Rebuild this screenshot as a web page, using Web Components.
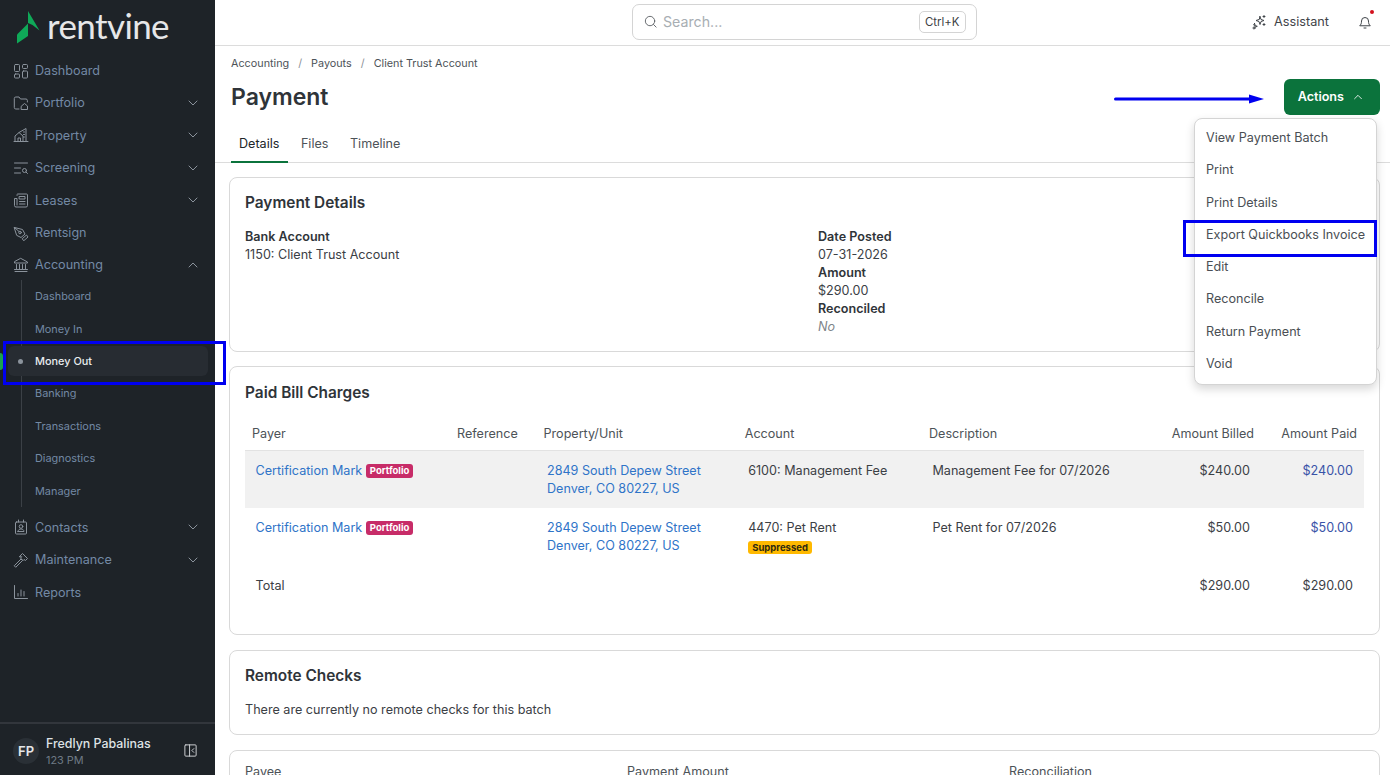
<!DOCTYPE html>
<html lang="en"><head><meta charset="utf-8"><title>Payment</title>
<style>
html,body{margin:0;height:100%;overflow:hidden;background:#fff}
body{font-family:Inter,"Liberation Sans",sans-serif;font-size:13px;color:#212529}
rv-app{display:flex;width:1390px;height:775px;overflow:hidden;position:relative}
</style></head><body>
<rv-app>
  <rv-sidebar slot="side"></rv-sidebar>
  <rv-main></rv-main>
</rv-app>
<script>
const ic={
dash:'<rect x="1.5" y="1.5" width="5" height="7" rx="1"/><rect x="9.5" y="1.5" width="5" height="4" rx="1"/><rect x="1.5" y="11" width="5" height="4" rx="1"/><rect x="9.5" y="8" width="5" height="7" rx="1"/>',
port:'<path d="M6 14H2.8A1.5 1.5 0 0 1 1.3 12.500V3.500A1.500 1.500 0 0 1 2.800 2H6l1.500 2h5.500a1.500 1.500 0 0 1 1.400 1.500V7"/><path d="M8.500 11l3-2.500 3 2.500v3.500h-6z"/>',
prop:'<path d="M1 14.500h14M2 14.500V9l4-3.500L10 9v5.500M5 14.500v-3.500h2.500v3.500M6 5.500L13 1.500v13M10.500 5h1M10.500 7.500h1M10.500 10h1"/>',
screen:'<path d="M1.500 3h13M1.500 8h6M1.500 13h6"/><circle cx="11.500" cy="10.500" r="2"/><path d="M13 12l1.500 1.500"/>',
lease:'<path d="M4 3.500a1 1 0 0 1 1-1.500h8.500a1 1 0 0 1 1 1v10.500a1.500 1.500 0 0 1-1.500 1.500H3a1.500 1.500 0 0 1-1.500-1.500V6.500H4v6.500"/><rect x="6.500" y="4.500" width="5.500" height="2.500"/><path d="M6.500 9.500h5.500M6.500 12h5.500"/>',
sign:'<path d="M1.500 2.500L9.500 4.500 12 9 8 12.500 4 10.500z"/><circle cx="7" cy="7.500" r="1.300"/><path d="M1.500 2.500L6 6.500M9.500 13.500L13.500 10 15 12 11 15.500z"/>',
bank:'<path d="M8 1.500l6.500 3.500v1h-13v-1zM2 14.500h12M1.500 12.500h13M3.500 7.500v5M6.500 7.500v5M9.500 7.500v5M12.500 7.500v5"/>',
contact:'<rect x="2.500" y="3" width="11" height="12" rx="1"/><path d="M5.500 1v2M10.500 1v2"/><circle cx="8" cy="7.500" r="1.800"/><path d="M5 12.500h6c0-1.500-1.300-2.500-3-2.500s-3 1-3 2.500z"/>',
maint:'<path d="M1.500 13.500L8 7l1.500 1.500-6.500 6.500zM6.500 4.500l3-3 5 5-2 2-1.500-1-1 1-2.500-2.500 1-1z"/>',
report:'<path d="M1.500 1.500v13h13M5 12V9.500M8 12V6M11 12V7.500"/>'
};
const svg=(p,s=16,extra='')=>`<svg width="${s}" height="${s}" viewBox="0 0 16 16" fill="none" stroke="currentColor" stroke-width="1" stroke-linecap="round" stroke-linejoin="round" ${extra}>${p}</svg>`;
const chev=(up)=>`<svg width="12" height="12" viewBox="0 0 12 12" fill="none" stroke="currentColor" stroke-width="1" stroke-linecap="round" stroke-linejoin="round"><path d="${up?'M2 8l4-4 4 4':'M2 4l4 4 4-4'}"/></svg>`;
class Base extends HTMLElement{
  constructor(){super();this.attachShadow({mode:'open'})}
  connectedCallback(){this.shadowRoot.innerHTML=this.render()}
}
const def=(n,r)=>customElements.define(n,class extends Base{render(){return r.call(this)}});

def('rv-app',function(){return `<style>:host{display:flex}</style><slot name="side"></slot><slot></slot>`});

def('rv-nav-item',function(){
  const i=this.getAttribute('icon'),c=this.getAttribute('chev');
  return `<style>:host{display:flex;align-items:center;height:32.4px;padding:0 16px 0 13px;color:#7389a5;font-size:12.6px;flex:none}
  svg{flex:none}.ic{width:16px;height:16px;margin-right:6px;color:#8b939c}span{flex:1}.c{color:#8b939c;display:flex}</style>
  <div class="ic">${svg(ic[i])}</div><span><slot></slot></span>${c?`<div class="c">${chev(c==='up')}</div>`:''}`;
});
def('rv-sub-item',function(){
  const a=this.hasAttribute('active');
  return `<style>:host{display:flex;align-items:center;height:32.4px;padding-left:35px;font-size:10.9px;color:${a?'#e9ecef':'#7389a5'};position:relative;flex:none;font-weight:${a?500:400}}
  .bg{position:absolute;left:8px;right:7px;top:1.500px;bottom:1.500px;background:#272c32;border-radius:6px}
  .dot{position:absolute;left:18px;top:14px;width:5px;height:5px;border-radius:50%;background:#8b939c}
  .pip{position:absolute;left:0;top:8px;width:3px;height:17px;background:#1aa251;border-radius:0 3px 3px 0}
  span{position:relative}</style>
  ${a?'<div class="pip"></div><div class="bg"></div><div class="dot"></div>':''}<span><slot></slot></span>`;
});
def('rv-sidebar',function(){
  return `<style>:host{display:flex;flex-direction:column;width:215px;height:775px;background:#1e2328;flex:none;color:#7389a5}
  .logo{display:flex;align-items:center;height:54.4px;padding-left:17px;flex:none;color:#e6e7e8;font-family:Lato,Inter,sans-serif;font-size:35px;font-weight:400;letter-spacing:-.6px;box-sizing:border-box}
  .logo svg{margin-right:7px;flex:none}.logo span{margin-bottom:4px}
  nav{display:flex;flex-direction:column;flex:1;min-height:0}
  .sub{position:relative;display:flex;flex-direction:column;flex:none;margin:-1px 0 4.300px}
  .sub::before{content:"";position:absolute;left:21px;top:0;bottom:0;width:1px;background:#3b4046}
  .foot{height:49px;flex:none;border-top:2px solid #32363c;display:flex;align-items:center;padding:2px 17px 0 13px;gap:7px}
  .av{width:26px;height:26px;border-radius:50%;background:#2a3036;color:#e5e7e9;font-weight:600;font-size:13px;display:flex;align-items:center;justify-content:center;flex:none}
  .who{flex:1;line-height:16px;margin-top:2px}.n{color:#dfe2e5;font-size:12.4px;font-weight:500}.r{font-size:10.9px;color:#6f7a85}
  .col{color:#d5d8db;display:flex}</style>
  <div class="logo"><svg width="23" height="33" viewBox="0 0 23 33" aria-hidden="true"><path d="M0 23.500L11 12.500V25L0 32.500z" fill="#0fa958"/><path d="M11 0L22.500 19.500 15.500 14 11 12z" fill="#0fa958"/></svg><span>rentvine</span></div>
  <nav>
    <rv-nav-item icon="dash">Dashboard</rv-nav-item>
    <rv-nav-item icon="port" chev="down">Portfolio</rv-nav-item>
    <rv-nav-item icon="prop" chev="down">Property</rv-nav-item>
    <rv-nav-item icon="screen" chev="down">Screening</rv-nav-item>
    <rv-nav-item icon="lease" chev="down">Leases</rv-nav-item>
    <rv-nav-item icon="sign">Rentsign</rv-nav-item>
    <rv-nav-item icon="bank" chev="up">Accounting</rv-nav-item>
    <div class="sub">
      <rv-sub-item>Dashboard</rv-sub-item>
      <rv-sub-item>Money In</rv-sub-item>
      <rv-sub-item active>Money Out</rv-sub-item>
      <rv-sub-item>Banking</rv-sub-item>
      <rv-sub-item>Transactions</rv-sub-item>
      <rv-sub-item>Diagnostics</rv-sub-item>
      <rv-sub-item>Manager</rv-sub-item>
    </div>
    <rv-nav-item icon="contact" chev="down">Contacts</rv-nav-item>
    <rv-nav-item icon="maint" chev="down">Maintenance</rv-nav-item>
    <rv-nav-item icon="report">Reports</rv-nav-item>
  </nav>
  <div class="foot"><div class="av">FP</div><div class="who"><div class="n">Fredlyn Pabalinas</div><div class="r">123 PM</div></div>
  <div class="col">${svg('<rect x="2" y="2" width="12" height="12" rx="1"/><path d="M7 2v12M11.500 6L9.500 8l2 2"/>',15)}</div></div>`;
});
def('rv-topbar',function(){
  return `<style>:host{display:flex;align-items:center;height:45px;border-bottom:1px solid #dcdcdc;flex:none;position:relative;box-sizing:content-box}
  .wrap{flex:1;display:flex;justify-content:center;padding-left:19px}
  .search{width:345px;height:36px;box-sizing:border-box;border:1px solid #d4d4d4;border-radius:7px;display:flex;align-items:center;padding:0 10px 0 10px;color:#a8aeb3;font-size:14.2px;margin:0 0 2px -15px}
  .search svg{color:#5f6368;margin-right:5px}.search span{flex:1}
  kbd{font:11.4px Inter,sans-serif;color:#3c4043;border:1px solid #d4d4d4;border-radius:5px;padding:0 5.500px;height:22px;line-height:20px;box-sizing:border-box}
  .right{position:absolute;right:17px;top:0;height:43px;display:flex;align-items:center;font-size:12.7px;color:#3f4449}
  .as{display:flex;align-items:center;gap:7px;margin-right:28px}
  .bell{position:relative;width:16px;height:16px}.bell i{position:absolute;right:-1px;top:-4px;width:4px;height:4px;border-radius:50%;background:#d3101c}</style>
  <div class="wrap"><div class="search">${svg('<circle cx="7.500" cy="7.500" r="5"/><path d="M11.200 11.200L14 14"/>',15)}<span>Search...</span><kbd>Ctrl+K</kbd></div></div>
  <div class="right"><div class="as">${svg('<path d="M9 2.500l1 3 3 1-3 1-1 3-1-3-3-1 3-1zM3.500 9.500l.8 2 2 .8-2 .8-.8-1.800-1-.6 1-.5zM13 1.500v2M12 2.500h2M13 9.500v2M12 10.500h2"/><circle cx="3" cy="14" r="1"/>',16)}<span>Assistant</span></div>
  <div class="bell">${svg('<path d="M3 11.500c1-1 1.500-2 1.500-4.500a3.500 3.500 0 0 1 7 0c0 2.500.5 3.500 1.500 4.500zM7 14h2"/>')}<i></i></div></div>`;
});
def('rv-btn',function(){
  return `<style>:host{display:flex;align-items:center;gap:8px;height:36px;padding:0 16px 0 14px;background:#0b733c;color:#fff;border-radius:6px;font-size:12.6px;font-weight:600;box-sizing:border-box;margin-top:-2px}
  svg{transform:scale(.85)}span{margin-bottom:1px}</style><span><slot></slot></span>${chev(true)}`;
});
def('rv-page-head',function(){
  return `<style>:host{display:flex;flex-direction:column;flex:none;height:117px;box-sizing:border-box;border-bottom:1px solid #dcdcdc;padding:0 10px 0 16px}
  .bc{display:flex;gap:9px;font-size:10.8px;color:#4d5358;height:35px;align-items:center;flex:none}
  .bc i{font-style:normal;color:#8a9096}
  .row{display:flex;align-items:flex-start;justify-content:space-between;height:50px;flex:none}
  h1{margin:0;font-size:23px;font-weight:600;color:#2f3439;line-height:33px}
  .tabs{display:flex;font-size:12.6px;color:#4d5358;margin-top:-2px}
  .t{padding:0 8px;height:34px;line-height:30px;box-sizing:border-box;margin-right:-3.500px}
  .t.a{border-bottom:2px solid #0b733c;color:#212529;padding-right:8.500px}</style>
  <div class="bc"><span>Accounting</span><i>/</i><span>Payouts</span><i>/</i><span>Client Trust Account</span></div>
  <div class="row"><h1>Payment</h1><rv-btn>Actions</rv-btn></div>
  <div class="tabs"><div class="t a">Details</div><div class="t" style="margin-left:8.500px">Files</div><div class="t" style="margin-left:9px">Timeline</div></div>`;
});
def('rv-card',function(){
  const t=this.getAttribute('title');
  return `<style>:host{display:block;border:1px solid #d9d9d9;border-radius:8px;background:#fff;padding:var(--pt,15px) 15px 15px;flex:none;box-sizing:border-box;height:var(--h,auto);margin-bottom:var(--mb,0)}
  h2{margin:0;font-size:15.4px;font-weight:600;color:#2f3439;line-height:20px}</style>
  ${t?`<h2>${t}</h2>`:''}<slot></slot>`;
});
def('rv-details',function(){
  return `<style>:host{display:grid;grid-template-columns:573px 1fr;margin-top:15.1px;font-size:12.6px;line-height:18px;color:#3b4045}
  b{font-weight:600;color:#2f3439;display:block}em{color:#7e8489;display:block}</style>
  <div><b>Bank Account</b>1150: Client Trust Account</div>
  <div><b>Date Posted</b>07-31-2026<b>Amount</b>$290.00<b>Reconciled</b><em>No</em></div>`;
});
def('rv-bills',function(){
  const portfolio='<span class="bd pk">Portfolio</span>';
  const row=(name,acc,desc,b,p,cl,extra)=>`<tr class="${cl}"><td><a>${name}</a> ${portfolio}</td><td></td><td><a>2849 South Depew Street<br>Denver, CO 80227, US</a></td><td>${acc}${extra||''}</td><td>${desc}</td><td class="r">${b}</td><td class="r"><a class="p">${p}</a></td></tr>`;
  return `<style>:host{display:block;margin-top:12.4px}
  table{border-collapse:collapse;table-layout:fixed;width:1119px;font-size:12.6px;color:#3b4045}
  th{font-weight:400;text-align:left;padding:2px 7px 0;height:33px;border-bottom:1px solid #e2e2e2;color:#4d5358}
  td{padding:11px 11px 0 10.5px;vertical-align:top;line-height:18px;height:46px}
  tr.g td{background:#f1f1f1}
  th.r{text-align:right}td.r{text-align:right}
  a{color:#2f74c8}a.p{color:#3953a8}
  .bd{display:inline-block;font-size:9.500px;font-weight:700;color:#fff;border-radius:3px;padding:0 4px;line-height:14px;height:14px;vertical-align:1px}
  .pk{background:#c72c68;margin-left:0}.y{background:#ffb900;color:#2f2a10;display:block;width:max-content;margin-top:4px;height:13px;line-height:13px}
  tfoot td{height:48px;padding-top:12px;line-height:18px}</style>
  <table><colgroup><col style="width:205px"><col style="width:86.500px"><col style="width:201.200px"><col style="width:184.300px"><col style="width:233px"><col style="width:106px"><col style="width:103px"></colgroup>
  <thead><tr><th>Payer</th><th>Reference</th><th>Property/Unit</th><th>Account</th><th>Description</th><th class="r">Amount Billed</th><th class="r">Amount Paid</th></tr></thead>
  <tbody>${row('Certification Mark','6100: Management Fee','Management Fee for 07/2026','$240.00','$240.00','g')}
  ${row('Certification Mark','4470: Pet Rent','Pet Rent for 07/2026','$50.00','$50.00','','<span class="bd y">Suppressed</span>')}</tbody>
  <tfoot><tr><td>Total</td><td></td><td></td><td></td><td></td><td class="r">$290.00</td><td class="r">$290.00</td></tr></tfoot></table>`;
});
def('rv-menu',function(){
  return `<style>:host{position:absolute;left:979px;top:117.5px;width:182.500px;height:267px;background:#fff;border:1px solid #d4d4d4;border-radius:8px;box-shadow:0 4px 10px rgba(0,0,0,.16);box-sizing:border-box;padding:2.8px 0;display:flex;flex-direction:column;font-size:12.6px;color:#4a4f54}
  div{height:32.300px;display:flex;align-items:center;padding-left:11px;white-space:nowrap}</style>
  <div>View Payment Batch</div><div>Print</div><div>Print Details</div><div>Export Quickbooks Invoice</div><div>Edit</div><div>Reconcile</div><div>Return Payment</div><div>Void</div>`;
});
def('rv-main',function(){
  return `<style>:host{flex:1;display:flex;flex-direction:column;min-width:0;height:775px;position:relative;overflow:hidden}
  .content{display:flex;flex-direction:column;gap:15px;padding:13.6px 10px 0 14px;flex:1;overflow:hidden}
  p{margin:14.5px 0 0;font-size:12.6px;color:#3b4045;line-height:18px}
  .pay{display:grid;grid-template-columns:382px 382px 1fr;font-size:12.6px;color:#4d5358;height:24px;margin-top:12.500px}</style>
  <rv-topbar></rv-topbar><rv-page-head></rv-page-head>
  <div class="content">
    <rv-card title="Payment Details" style="--h:175px;--pt:15px;--mb:-.4px"><rv-details></rv-details></rv-card>
    <rv-card title="Paid Bill Charges" style="--h:269px;--pt:15.6px"><rv-bills></rv-bills></rv-card>
    <rv-card title="Remote Checks" style="--h:85px;--pt:15px"><p>There are currently no remote checks for this batch</p></rv-card>
    <rv-card style="--h:60px;--pt:0px"><div class="pay"><span>Payee</span><span>Payment Amount</span><span>Reconciliation</span></div></rv-card>
  </div>
  <rv-menu></rv-menu>`;
});
def('rv-annot',function(){
  return `<style>:host{position:absolute;inset:0;pointer-events:none;display:block}
  .b{position:absolute;border:3px solid #0000f0;box-sizing:border-box}</style>
  <div class="b" style="left:3px;top:341px;width:223px;height:44px"></div>
  <div class="b" style="left:1183px;top:220px;width:194px;height:37px"></div>
  <svg style="position:absolute;left:1113px;top:91px" width="155" height="16"><path d="M2.500 8H140" stroke="#0000f0" stroke-width="3" stroke-linecap="round"/><path d="M136 3.500L151 8 136 12.500z" fill="#0000f0"/></svg>`;
});
document.querySelector('rv-app').appendChild(document.createElement('rv-annot'));
</script>
</body></html>
